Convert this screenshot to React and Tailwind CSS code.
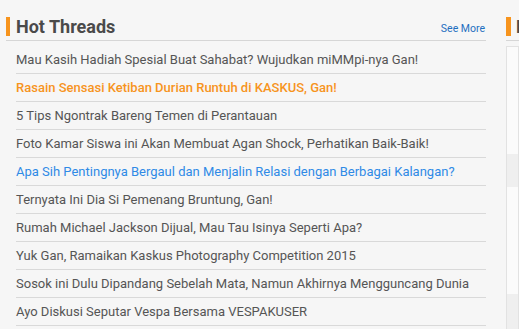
import React from "react";

const items = [
  { t: "Mau Kasih Hadiah Spesial Buat Sahabat? Wujudkan miMMpi-nya Gan!", c: "text-[#555555]" },
  { t: "Rasain Sensasi Ketiban Durian Runtuh di KASKUS, Gan!", c: "text-[#f7941d] font-medium" },
  { t: "5 Tips Ngontrak Bareng Temen di Perantauan", c: "text-[#555555]" },
  { t: "Foto Kamar Siswa ini Akan Membuat Agan Shock, Perhatikan Baik-Baik!", c: "text-[#555555]" },
  { t: "Apa Sih Pentingnya Bergaul dan Menjalin Relasi dengan Berbagai Kalangan?", c: "text-[#2f8ae6]" },
  { t: "Ternyata Ini Dia Si Pemenang Bruntung, Gan!", c: "text-[#555555]" },
  { t: "Rumah Michael Jackson Dijual, Mau Tau Isinya Seperti Apa?", c: "text-[#555555]" },
  { t: "Yuk Gan, Ramaikan Kaskus Photography Competition 2015", c: "text-[#555555]" },
  { t: "Sosok ini Dulu Dipandang Sebelah Mata, Namun Akhirnya Mengguncang Dunia", c: "text-[#555555]" },
  { t: "Ayo Diskusi Seputar Vespa Bersama VESPAKUSER", c: "text-[#555555]" },
];

export default function App() {
  return (
    <div
      className="w-[519px] h-[329px] overflow-hidden bg-[#f6f6f6] flex pt-[17px]"
      style={{ fontFamily: "Roboto, 'Liberation Sans', sans-serif" }}
    >
      <div className="ml-[6px] w-[480px] shrink-0">
        <div className="flex items-end justify-between border-b border-[#d6d6d6] pb-[4px]">
          <div className="flex items-center gap-[6px]">
            <div className="w-[4px] h-[19px] bg-[#f7941d]" />
            <div className="text-[18px] leading-[19px] font-bold text-[#4a4a4a]">Hot Threads</div>
          </div>
          <div className="text-[10.5px] leading-[12px] text-[#1f6fc0] pr-[1px] mb-[1px]">See More</div>
        </div>
        <div className="pl-[10px] pt-[5px]">
          {items.map((it, i) => (
            <div
              key={i}
              className={`h-[28px] border-b border-[#d9d9d9] flex items-center text-[13px] leading-[27px] whitespace-nowrap ${it.c}`}
            >
              {it.t}
            </div>
          ))}
        </div>
      </div>
      <div className="ml-[20px] flex-1 min-w-0 overflow-hidden">
        <div className="flex items-center gap-[5px] border-b border-[#d6d6d6] pb-[4px]">
          <div className="w-[5px] h-[19px] bg-[#f7941d] shrink-0" />
          <div className="text-[18px] leading-[19px] font-bold text-[#4a4a4a] whitespace-nowrap">Hot</div>
        </div>
        <div className="mt-[5px] border border-[#e2e2e2] bg-[#fbfbfb] h-[300px] flex flex-col">
          <div className="h-[107px]" />
          <div className="h-[33px] bg-[#efefef]" />
          <div className="h-[107px]" />
          <div className="h-[40px] bg-[#efefef]" />
        </div>
      </div>
    </div>
  );
}
